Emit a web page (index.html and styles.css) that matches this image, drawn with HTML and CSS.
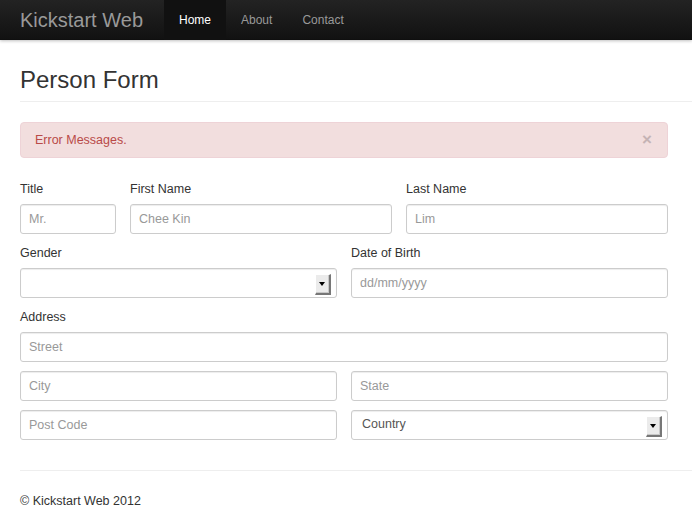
FILE: index.html
```html
<!DOCTYPE html>
<html>
<head>
<meta charset="utf-8">
<title>Person Form</title>
<link rel="stylesheet" href="styles.css">
</head>
<body>
<div class="navbar">
  <a class="brand" href="#">Kickstart Web</a>
  <ul class="nav">
    <li class="active"><a href="#">Home</a></li>
    <li><a href="#">About</a></li>
    <li><a href="#">Contact</a></li>
  </ul>
</div>
<div class="container">
  <div class="page-header"><h1>Person Form</h1></div>
  <div class="main">
    <div class="alert"><span>Error Messages.</span><span class="close">×</span></div>
    <form class="form">
      <div class="row row-3">
        <div class="group"><label>Title</label><input type="text" placeholder="Mr."></div>
        <div class="group"><label>First Name</label><input type="text" placeholder="Chee Kin"></div>
        <div class="group"><label>Last Name</label><input type="text" placeholder="Lim"></div>
      </div>
      <div class="row row-2">
        <div class="group"><label>Gender</label>
          <div class="select"><span class="select-text"></span><span class="arrow"><span class="tri"></span></span></div>
        </div>
        <div class="group"><label>Date of Birth</label><input type="text" placeholder="dd/mm/yyyy"></div>
      </div>
      <div class="group address"><label>Address</label>
        <input type="text" class="full" placeholder="Street">
        <div class="row row-2 sub">
          <input type="text" placeholder="City">
          <input type="text" placeholder="State">
        </div>
        <div class="row row-2 sub">
          <input type="text" placeholder="Post Code">
          <div class="select"><span class="select-text">Country</span><span class="arrow"><span class="tri"></span></span></div>
        </div>
      </div>
    </form>
  </div>
  <footer class="footer"><p>© Kickstart Web 2012</p></footer>
</div>
</body>
</html>
```
FILE: styles.css
```css
* { box-sizing: border-box; }
html, body { margin: 0; padding: 0; background: #fff; }
body {
  font-family: "Liberation Sans", Arial, sans-serif;
  font-size: 12.5px;
  line-height: 18px;
  color: #333;
  overflow: hidden;
}
.navbar {
  height: 40px;
  display: flex;
  align-items: stretch;
  background: linear-gradient(#232323, #111);
  box-shadow: 0 1px 3px rgba(0,0,0,.25), 0 -1px 0 rgba(0,0,0,.1) inset;
}
.brand {
  display: flex;
  align-items: center;
  padding: 0 21px 0 20px;
  font-size: 20px;
  color: #999;
  text-decoration: none;
  padding-bottom: 1px;
}
.nav {
  display: flex;
  margin: 0;
  padding: 0;
  list-style: none;
}
.nav li { display: flex; }
.nav a {
  display: flex;
  align-items: center;
  padding: 0 15px 1px;
  color: #999;
  text-decoration: none;
  font-size: 12px;
}
.nav .active a {
  color: #fff;
  background: #111;
}
.container {
  padding-left: 20px;
}
.page-header {
  border-bottom: 1px solid #eee;
  padding: 25px 0 6px;
}
.page-header h1 {
  margin: 0;
  font-size: 24px;
  line-height: 30px;
  font-weight: normal;
  color: #333;
}
.main {
  width: 648px;
  padding-top: 20px;
}
.alert {
  display: flex;
  justify-content: space-between;
  align-items: center;
  height: 36px;
  padding: 0 15px 0 14px;
  background: #f2dede;
  border: 1px solid #eed3d7;
  border-radius: 4px;
  color: #b94a48;
  margin-bottom: 22px;
}
.close {
  font-size: 17px;
  font-weight: bold;
  color: #c5b3b4;
  line-height: 18px;
}
.form { margin: 0; }
.row { display: grid; gap: 14px; }
.row-3 { grid-template-columns: 96px 1fr 1fr; }
.row-2 { grid-template-columns: 1fr 1fr; }
.group { display: flex; flex-direction: column; margin-bottom: 10px; }
label {
  display: block;
  line-height: 18px;
  margin-bottom: 6px;
  color: #333;
}
input, .select {
  display: block;
  width: 100%;
  height: 30px;
  padding: 4px 8px;
  font-family: "Liberation Sans", Arial, sans-serif;
  font-size: 12.5px;
  color: #555;
  border: 1px solid #ccc;
  border-radius: 3px;
  background: #fff;
  box-shadow: inset 0 1px 1px rgba(0,0,0,.075);
  outline: none;
  margin: 0;
}
input::placeholder { color: #999; }
.sub { margin-top: 9px; }
.select {
  position: relative;
  display: flex;
  align-items: center;
  padding: 0 10px;
  padding-bottom: 3px;
}
.select-text { color: #555; }
.arrow {
  position: absolute;
  right: 5px;
  top: 5px;
  width: 16px;
  height: 21px;
  background: #ebebeb;
  border-top: 1px solid #fff;
  border-left: 1px solid #fff;
  border-right: 2px solid #777;
  border-bottom: 2px solid #777;
  box-shadow: inset -1px -1px 0 #c8c8c8;
}
.tri {
  position: absolute;
  left: 3px;
  top: 7px;
  width: 0;
  height: 0;
  border-left: 3px solid transparent;
  border-right: 3px solid transparent;
  border-top: 4px solid #000;
}
.footer {
  margin-top: 30px;
  border-top: 1px solid #eee;
  padding-top: 21px;
}
.footer p { margin: 0; color: #333; }
```
